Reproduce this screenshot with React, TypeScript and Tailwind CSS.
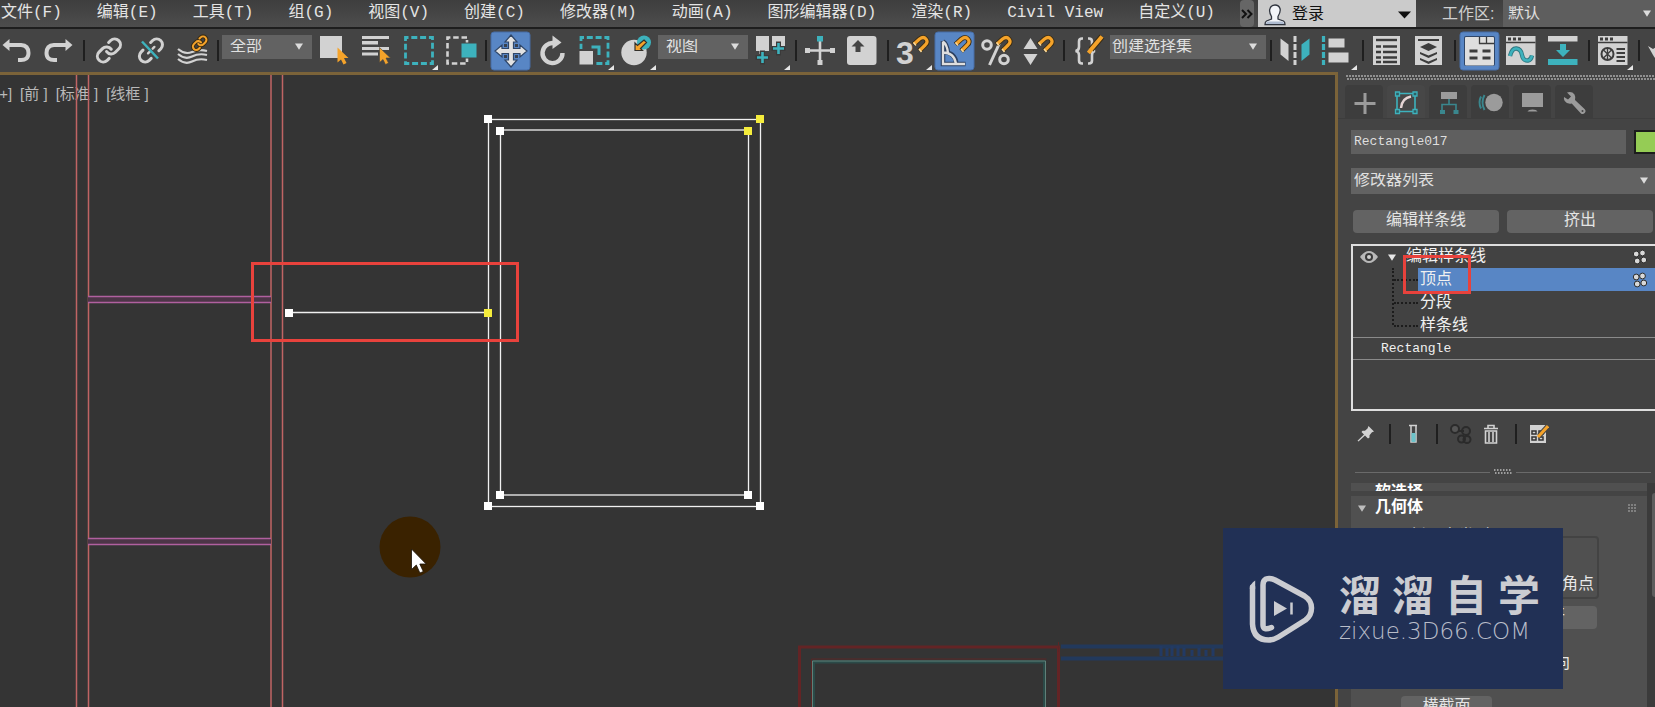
import React from "react";

const W = "#d2d2d2";
const T = "#3db2bd";
const O = "#f5a32a";
const D = "#3c3c3c";

const LINK_A = "M10 13a5 5 0 0 0 7.54.54l3-3a5 5 0 0 0-7.07-7.07l-1.72 1.71";
const LINK_B = "M14 11a5 5 0 0 0-7.54-.54l-3 3a5 5 0 0 0 7.07 7.07l1.71-1.71";

const menus = [
  "文件(F)",
  "编辑(E)",
  "工具(T)",
  "组(G)",
  "视图(V)",
  "创建(C)",
  "修改器(M)",
  "动画(A)",
  "图形编辑器(D)",
  "渲染(R)",
  "Civil View",
  "自定义(U)",
];

type ToolProps = { label: string; active?: boolean; flyout?: boolean; children: React.ReactNode };

function Tool({ label, active, flyout, children }: ToolProps) {
  return (
    <button type="button" aria-label={label} aria-pressed={active} className="flex h-[40px] w-[42px] shrink-0 items-center justify-center">
      <svg width="42" height="40" viewBox="0 -1 42 40" fill="none">
        {active && <rect x="1" y="0" width="39" height="38" rx="3" fill="#5886c5" stroke="#466da6" />}
        {children}
        {flyout && <path d="M40 33v5h-6z" fill="#e6e6e6" />}
      </svg>
    </button>
  );
}

function Sep() {
  return (
    <div className="flex w-2 shrink-0 justify-center">
      <div className="h-[21px] w-[2px] bg-[#1f1f1f]" />
    </div>
  );
}

function Magnet({ x = 0 }: { x?: number }) {
  return (
    <g transform={`translate(${x} 0)`} strokeLinecap="butt">
      <path d="M21.500 12.500 27.500 7q4-3 6.500 0t-.8 6l-6 6" stroke="#3a2c14" strokeWidth="5" />
      <path d="M22 12 27.500 7q4-3 6.500 0t-.8 6l-5.500 5.500" stroke={O} strokeWidth="3.200" />
      <path d="m21.500 10.500 2.500 3M27 17l2.500 3" stroke="#f6d9a0" strokeWidth="1.500" />
    </g>
  );
}

function Caret({ className, fill = "#dcdcdc" }: { className?: string; fill?: string }) {
  return (
    <svg className={className} width="8" height="7" viewBox="0 0 8 7">
      <path d="M0 0.500h8L4 6.800z" fill={fill} />
    </svg>
  );
}

type DropProps = { label: string; value: string; box: string; text?: string };

function Drop({ label, value, box, text = "pl-2" }: DropProps) {
  return (
    <div className={`relative shrink-0 ${box}`}>
      <select aria-label={label} className={`h-full w-full appearance-none bg-[#626262] pr-6 text-base leading-none text-[#e0e0e0] outline-none ${text}`}>
        <option>{value}</option>
      </select>
      <Caret className="pointer-events-none absolute right-[9px] top-1/2 -mt-1" />
    </div>
  );
}

function MenuBar() {
  return (
    <header className="flex h-[29px] shrink-0 overflow-hidden border-b-2 border-[#1e1e1e] bg-linear-to-b from-[#3e3e3e] to-[#4d4d4d]">
      <nav className="flex min-w-0 flex-1 items-center gap-[35px] overflow-hidden whitespace-nowrap pl-px pb-[2px]">
        {menus.map((m) => (
          <button key={m} type="button" className="shrink-0 text-base leading-5 text-[#e4e4e4]">
            {m}
          </button>
        ))}
      </nav>
      <div className="flex shrink-0">
        <button type="button" aria-label="更多" className="mr-1 flex h-full w-[14px] items-center justify-center rounded bg-[#666]">
          <svg width="12" height="10" viewBox="0 0 12 10" fill="none" stroke="#111" strokeWidth="2">
            <path d="m1 1 4 4-4 4M6.500 1l4 4-4 4" />
          </svg>
        </button>
        <button type="button" className="flex h-full w-[158px] items-center bg-[#cbcbcb] pl-[6px] pr-[5px] pt-[2px] text-base text-[#111]">
          <svg width="22" height="22" viewBox="0 0 22 22">
            <path d="M7.500 12.500C6 10 5 7 6 4.500 7 1.500 9 1 11 1s4 .5 5 3.500c.8 2.500-.5 5.500-2 8v2.500l5.500 2q1.500.8 1.500 3.500H1q0-2.700 1.500-3.500l5-2z" fill="#f3f5f9" stroke="#30353f" strokeWidth="1.300" />
            <path d="M2 20q0-2 1.500-2.500h15Q20 18 20 20z" fill="#aebbd0" />
          </svg>
          <span className="ml-[6px] flex-1 text-left leading-5">登录</span>
          <svg width="13" height="8" viewBox="0 0 13 8">
            <path d="M0 .5h13L6.500 7.500z" fill="#111" />
          </svg>
        </button>
        <label htmlFor="workspace" className="flex w-[87px] items-center pl-[26px] pt-px font-['Liberation_Sans','Noto_Sans_CJK_SC',sans-serif] text-base text-[#cfcfcf]">
          工作区:
        </label>
        <div className="relative w-[152px]">
          <select id="workspace" className="h-full w-full appearance-none bg-[#5e5e5e] pl-[5px] pt-px text-base leading-none text-[#e0e0e0]">
            <option>默认</option>
          </select>
          <Caret className="pointer-events-none absolute right-1 top-[10px]" />
        </div>
      </div>
    </header>
  );
}

function Toolbar() {
  return (
    <div role="toolbar" className="-ml-1 flex h-[43px] shrink-0 items-center overflow-hidden bg-[#444]">
      <Tool label="撤消">
        <path d="M6.500 13 13.500 7v12z" fill={W} />
        <path d="M12 13h13q7.500.5 7.500 8T24 28h-2" stroke={W} strokeWidth="4" />
      </Tool>
      <Tool label="重做">
        <path d="M34.500 13 27.500 7v12z" fill={W} />
        <path d="M29 13H16q-7.500.5-7.500 8T17 28h2" stroke={W} strokeWidth="4" />
      </Tool>
      <Sep />
      <Tool label="链接">
        <g transform="translate(7 4.500) scale(1.16)" stroke={W} strokeWidth="2.600" strokeLinecap="round">
          <path d={LINK_A} />
          <path d={LINK_B} />
        </g>
      </Tool>
      <Tool label="取消链接">
        <g transform="translate(7 4.500) scale(1.16)" stroke={W} strokeWidth="2.600" strokeLinecap="round">
          <path d="m18.840 12.250 1.720-1.710a5 5 0 0 0-.14-7.070 5 5 0 0 0-6.950 0l-1.720 1.710" />
          <path d="m5.170 11.750-1.710 1.710a5 5 0 0 0 .12 7.070 5 5 0 0 0 6.950 0l1.710-1.710" />
          <path d="m9.500 14.500 1.500-1.500M13.500 10.500 15 9" strokeWidth="2" />
        </g>
        <path d="m12 9.500 16 17" stroke={T} strokeWidth="2.500" />
      </Tool>
      <Tool label="绑定到空间扭曲">
        <g stroke={W} strokeWidth="2.200">
          <path d="M6 17q7 6 14 3t15-1" />
          <path d="M6 22q7 6 14 2.500T35 23" />
          <path d="M6 27q7 6 14 2.500T35 28" />
        </g>
        <g transform="translate(19.500 3) scale(.68)" strokeLinecap="round">
          <path d={LINK_A} stroke="#3a2c14" strokeWidth="6" />
          <path d={LINK_B} stroke="#3a2c14" strokeWidth="6" />
          <path d={LINK_A} stroke={O} strokeWidth="3" />
          <path d={LINK_B} stroke={O} strokeWidth="3" />
        </g>
      </Tool>
      <Sep />
      <Drop label="选择过滤器" value="全部" box="mb-[7px] h-6 w-[90px] mr-[2px]" />
      <Tool label="选择对象">
        <rect x="6" y="4" width="22" height="22" fill={W} />
        <path d="M23.500 15.500v15l3.500-3 2.500 5 3-1.500-2.500-5h4.500z" fill={O} />
      </Tool>
      <Tool label="按名称选择">
        <g fill={W}>
          <rect x="6" y="4" width="27" height="3" />
          <rect x="6" y="9" width="16" height="3.500" />
          <rect x="6" y="15" width="27" height="3" />
          <rect x="6" y="20.500" width="16" height="3" />
        </g>
        <path d="M23.500 15.500v15l3.500-3 2.500 5 3-1.500-2.500-5h4.500z" fill={O} stroke="#444" strokeWidth=".6" />
      </Tool>
      <Tool label="矩形选择区域" flyout>
        <rect x="7.500" y="5.500" width="27" height="26" stroke={T} strokeWidth="2.800" strokeDasharray="6 2.800" strokeDashoffset="3" />
      </Tool>
      <Tool label="窗口/交叉">
        <path d="M27 5.500H7.500v26H27V5.500" stroke={W} strokeWidth="2.600" strokeDasharray="5.500 2.800" />
        <rect x="20" y="10.500" width="17" height="16" fill="#444" />
        <rect x="21.500" y="11.500" width="15" height="14" fill={T} />
      </Tool>
      <Sep />
      <Tool label="选择并移动" active>
        <path
          d="M21 3l6 7h-3.500v6.500H30V13l7 6-7 6v-3.500h-6.500V28H27l-6 7-6-7h3.500v-6.500H12V25l-7-6 7-6v3.500h6.500V10H15z"
          fill="#e2e2e2"
          stroke="#2f4668"
          strokeWidth="1.200"
        />
        <path d="M14 12h3v3h-3zM25 12h3v3h-3zM14 23h3v3h-3zM25 23h3v3h-3z" fill="#39424f" />
      </Tool>
      <Tool label="选择并旋转">
        <path d="M22 11.200A10 10 0 1 0 30.500 21" stroke={W} strokeWidth="4.400" />
        <path d="M20.500 3.500 29.500 10.500 20.500 17z" fill={W} />
      </Tool>
      <Tool label="选择并缩放" flyout>
        <rect x="7" y="5.500" width="27" height="26" stroke={T} strokeWidth="2.800" strokeDasharray="6 2.800" strokeDashoffset="3" />
        <rect x="4" y="17" width="17" height="17" fill="#444" />
        <rect x="5.500" y="19" width="13.500" height="13.500" fill={W} />
        <path d="M17.500 15H25v8" stroke={T} strokeWidth="3" />
      </Tool>
      <Tool label="选择并放置" flyout>
        <circle cx="18" cy="20.500" r="12.700" fill={W} />
        <circle cx="28" cy="10.500" r="7" fill={T} />
        <path d="m28 8 2.500 2.500-6 6 2 2h-7.500V11l2.500 2.500z" fill={O} stroke="#33302a" strokeWidth="1.200" />
      </Tool>
      <Drop label="参考坐标系" value="视图" box="mb-[7px] h-6 w-[90px] mr-[2px]" />
      <Tool label="使用轴点中心" flyout>
        <path d="M6 4h13v15h-4v3H9.500v-3H6zM22 4h13v12H22z" fill={W} />
        <path d="M12.500 18.500v14M5.500 25.500h14M28.500 9.500v14M21.500 16.500h14" stroke="#3a3a3a" strokeWidth="5" />
        <path d="M12.500 20v11M7 25.500h11M28.500 11v11M23 16.500h11" stroke={T} strokeWidth="2.600" />
      </Tool>
      <Sep />
      <Tool label="选择并操纵">
        <path d="M20 6v26M6 18.500h28" stroke={W} strokeWidth="2.600" />
        <path d="M5 16h5v5H5zM30 16h5v5h-5zM17.500 28h5v5h-5z" fill={W} />
        <rect x="17" y="4" width="6" height="5.500" fill={T} />
      </Tool>
      <Tool label="键盘快捷键覆盖切换">
        <rect x="5" y="4" width="29.500" height="29" rx="3" fill={W} />
        <path d="m16 8 6.500 6.500H18.500V20h-5v-5.500H9.500z" fill="#444" />
      </Tool>
      <Sep />
      <Tool label="捕捉开关" flyout>
        <text x="4" y="32" fill={W} fontSize="32" fontWeight="700" fontFamily="Liberation Sans, sans-serif">
          3
        </text>
        <Magnet />
      </Tool>
      <Tool label="角度捕捉" active>
        <path d="M9 9v23H31.500M9 20q12 0 13.500 12M9 9.500q4 2 5 11.500" stroke="#2c4060" strokeWidth="4.600" />
        <path d="M9 9.500V32H31M9 20.500q11 0 13 11M9 9.500q4 3 5 11.500" stroke="#dedede" strokeWidth="2.300" />
        <Magnet />
      </Tool>
      <Tool label="百分比捕捉">
        <circle cx="11" cy="13" r="4.300" stroke={W} strokeWidth="3" />
        <circle cx="28" cy="27.500" r="4.300" stroke={W} strokeWidth="3" />
        <path d="M24.500 9 13.500 33" stroke={W} strokeWidth="3" />
        <Magnet x={-1} />
      </Tool>
      <Tool label="微调器捕捉">
        <path d="M12.500 6 19.500 17h-14zM12.500 33 5.500 22h14z" fill={W} />
        <Magnet x={-1} />
      </Tool>
      <Sep />
      <Tool label="编辑命名选择集">
        <g stroke={W} strokeWidth="2.600">
          <path d="M15 6.500h-1q-3 0-3 3v5.500q0 3.500-3.500 4 3.500.5 3.500 4v5.500q0 3 3 3h1" />
          <path d="M20 6.500h1q3 0 3 3v5.500q0 3.500 3 4-3 .5-3 4v5.500q0 3-3 3h-1" />
        </g>
        <path d="m34 4.500-11 13" stroke="#3a2c14" strokeWidth="6" />
        <path d="m34 4.500-10.500 12.500-3 4" stroke={O} strokeWidth="4" />
      </Tool>
      <Drop label="命名选择集" value="创建选择集" box="mb-[7px] h-6 w-[156px] mr-px" text="pl-[2px]" />
      <Sep />
      <Tool label="镜像">
        <path d="m5.500 6.500 8 6V29l-8-6.500z" fill={W} />
        <path d="M20 4v29" stroke={W} strokeWidth="3" strokeDasharray="6 2" />
        <path d="m34.500 6.500-8 6V29l8-6.500z" fill={T} />
      </Tool>
      <Tool label="对齐" flyout>
        <path d="M6.500 4v29" stroke={T} strokeWidth="3.200" strokeDasharray="6 2" />
        <path d="M11.500 6.500h16v9h-16zM11.500 20.500h20v10h-20z" fill={W} />
      </Tool>
      <Sep />
      <Tool label="场景资源管理器">
        <rect x="6" y="4" width="27" height="29" fill={W} />
        <path d="M9 8h21" stroke={D} strokeWidth="2.400" />
        <path d="M9 14.500h5M9 20h5M9 25.500h5M9 30h5M16 14.500h14M16 20h14M16 25.500h14M16 30h14" stroke={D} strokeWidth="2.400" />
      </Tool>
      <Tool label="层资源管理器">
        <rect x="6" y="4" width="27" height="29" fill={W} />
        <path d="M9 8h21" stroke={D} strokeWidth="2" />
        <path d="m19.500 11 8.500 4-8.500 4-8.500-4zM11 20l8.500 3.500L28 20v2l-8.500 4-8.500-4zM11 26l8.500 3.500L28 26v2l-8.500 4-8.500-4z" fill={D} />
      </Tool>
      <Sep />
      <Tool label="切换功能区" active>
        <rect x="5" y="4" width="31" height="30" rx="2" fill="#2f4668" />
        <rect x="6" y="5" width="29" height="28.500" rx="1" fill="#dedede" />
        <path d="M20.500 5v6.500H35M27.500 5v6.500" stroke={D} strokeWidth="1.300" />
        <path d="M10.500 19h8M23.500 19h8M10.500 26h8M23.500 26h8" stroke={D} strokeWidth="3" />
      </Tool>
      <Tool label="曲线编辑器">
        <rect x="5" y="4" width="29.500" height="29" fill={W} />
        <path d="M5 10.500h29.500" stroke={D} strokeWidth="1.500" />
        <path d="M7 5.500h3v3H7zM12 5.500h3v3h-3zM17 5.500h3v3h-3z" fill={D} />
        <path d="M9 24q2-8 6.500-7.500T21 23t6 5.500q3-.5 4-5" stroke="#2e7780" strokeWidth="4.400" />
        <path d="M9 24q2-8 6.500-7.500T21 23t6 5.500q3-.5 4-5" stroke={T} strokeWidth="2.600" />
      </Tool>
      <Tool label="图解视图">
        <rect x="5" y="4" width="29.500" height="5.500" fill={W} />
        <path d="M17 12h6v6h4l-7 7-7-7h4z" fill={T} />
        <rect x="5" y="27" width="29.500" height="6" fill={T} />
      </Tool>
      <Sep />
      <Tool label="渲染设置" flyout>
        <rect x="5" y="4" width="29.500" height="29" fill={W} />
        <path d="M5 10.500h29.500" stroke={D} strokeWidth="1.500" />
        <path d="M7 5.500h3v3H7zM12 5.500h3v3h-3zM17 5.500h3v3h-3z" fill={D} />
        <circle cx="14.500" cy="22" r="6" stroke={D} strokeWidth="2" />
        <path d="m10.500 18 8 8m0-8-8 8M14.500 16v12" stroke={D} strokeWidth="1.300" />
        <path d="M23.500 17H32M23.500 21H32M23.500 25H32M23.500 29H32" stroke={D} strokeWidth="2" />
      </Tool>
      <Sep />
      <Tool label="渲染帧窗口">
        <path d="m5 14 5 9q4 8 16 8V15H13l-3 2z" fill={W} />
      </Tool>
    </div>
  );
}

const vertices = [
  [488, 119, "#fff"],
  [760, 119, "#f4ec3c"],
  [488, 506, "#fff"],
  [760, 506, "#fff"],
  [500, 131, "#fff"],
  [748, 131, "#f4ec3c"],
  [500, 495, "#fff"],
  [748, 495, "#fff"],
  [289, 313, "#fff"],
  [488, 313, "#f4ec3c"],
] as const;

function Viewport() {
  return (
    <section aria-label="前视图" className="relative min-w-0 flex-1 overflow-hidden border-t-[3px] border-r-[3px] border-[#7b6339] bg-[#343434]">
      <div className="-ml-[5px] flex gap-2 pt-[9px] font-['Liberation_Sans','Noto_Sans_CJK_SC',sans-serif] text-[15px] leading-5 text-[#b9b9b9]">
        <button type="button">[+]</button>
        <button type="button">[前 ]</button>
        <button type="button">[标准 ]</button>
        <button type="button">[线框 ]</button>
      </div>
      <svg className="pointer-events-none absolute inset-0 h-full w-full" fill="none">
        <g transform="translate(0 -75)">
          <path d="M76.500 75v640M88.500 75v640M271 75v640M282.500 75v640" stroke="#c06464" strokeWidth="1.500" />
          <path d="M88 297h183v6H88zM88 538h183v6H88z" fill="#4c3547" />
          <path d="M88 296.500h183M88 302.500h183M88 538.500h183M88 544.500h183" stroke="#b0609f" strokeWidth="1.300" />
          <path d="M799.500 710v-63h259v63" stroke="#632425" strokeWidth="3" />
          <path d="M1058.500 642v10M811.500 710v-51h235" stroke="#5a2626" strokeWidth="1" />
          <path d="M813.500 710v-48h231v48" stroke="#2b4a48" strokeWidth="3" />
          <path d="M812.500 710v-49h233v49" stroke="#5f8078" />
          <path d="M1061 646.500h170M1061 658.500h170" stroke="#22395c" strokeWidth="4" />
          <path d="M1161 646v10M1167 648v8M1172 646v10M1178 646v10M1184 648v8M1192 650v6M1199 648v8M1206 650v6M1213 648v8" stroke="#223a64" strokeWidth="3" />
          <g stroke="#f0f0f0" strokeWidth="1.300">
            <rect x="488.500" y="119.500" width="272" height="387" />
            <rect x="500.500" y="130" width="248" height="365" />
            <path d="M288 312.500h200" />
          </g>
          {vertices.map(([x, y, c]) => (
            <rect key={`${x}-${y}`} x={x - 4} y={y - 4} width="8" height="8" fill={c} />
          ))}
          <rect x="252.500" y="263.500" width="265" height="77" stroke="#e8423c" strokeWidth="3" />
          <circle cx="410" cy="547" r="30.500" fill="#3a2200" />
          <path d="M411.500 549v20.500l4.800-4.500 3.600 8 3.400-1.500-3.500-7.500h6.400z" fill="#fff" stroke="#1b1208" strokeWidth=".8" />
        </g>
      </svg>
    </section>
  );
}

const tabs: { label: string; icon: React.ReactNode }[] = [
  { label: "创建", icon: <path d="M20 8v21M9.500 18.500h21" stroke="#9b9b9b" strokeWidth="3" /> },
  {
    label: "修改",
    icon: (
      <>
        <path d="M10 8.500h18v18H10z" stroke={T} strokeWidth="1.600" />
        <path d="M8.500 7h4v4h-4zM26 7h4v4h-4zM8.500 24.500h4v4h-4zM26 24.500h4v4h-4z" fill="#2f5f64" stroke={T} strokeWidth="1.300" />
        <path d="M14 23q1-10 10-11.500" stroke="#e5d5d5" strokeWidth="2.500" />
      </>
    ),
  },
  {
    label: "层次",
    icon: (
      <>
        <path d="M12 7h16v7H12z" fill="#9b9b9b" />
        <path d="M20 14v6M13 26v-6.500h14V26" stroke="#3a878e" strokeWidth="1.600" />
        <path d="M11 25h5v4h-5zM24.500 25h5v4h-5z" fill="#3a878e" />
      </>
    ),
  },
  {
    label: "运动",
    icon: (
      <>
        <circle cx="23" cy="17.500" r="8.700" fill="#9b9b9b" />
        <path d="M13.500 10q-4 7.500 0 15M10 11.500q-3 6 0 12" stroke="#3a878e" strokeWidth="2" />
      </>
    ),
  },
  {
    label: "显示",
    icon: (
      <>
        <path d="M9 8h21v14H9z" fill="#9b9b9b" />
        <path d="M14.500 26.500q1-2 5-2t5 2z" fill="#9b9b9b" />
      </>
    ),
  },
  {
    label: "实用程序",
    icon: (
      <>
        <path d="M12 7.500q5-1.500 7.500 2 1.500 3 .5 5.500l9.500 9q2 2 .2 4t-4 .2l-9-9.700q-4.500 1-7-2.500-1.200-2-.7-4l4 2.500 3-3z" fill="#9b9b9b" />
        <circle cx="27.500" cy="26" r="1" fill="#444" />
      </>
    ),
  },
];

function Dots() {
  return (
    <svg width="16" height="16" viewBox="0 0 16 16">
      <g fill="#d8d8d8" stroke="#2c2c2c" strokeWidth="1">
        <circle cx="4.200" cy="5" r="2.900" />
        <circle cx="10.500" cy="4" r="2.900" />
        <circle cx="5.200" cy="12" r="2.900" />
        <circle cx="11.800" cy="11" r="2.900" />
      </g>
    </svg>
  );
}

function Stack() {
  const children = ["顶点", "分段", "样条线"];
  return (
    <div className="relative h-[167px] border-2 border-r-0 border-[#dedede] bg-[#424242] text-base text-[#f0f0f0]">
      <div className="flex h-[22px] items-center pl-[7px] pr-[7px]">
        <svg width="18" height="12" viewBox="0 0 18 12">
          <path d="M0 6q9-12 18 0-9 12-18 0z" fill="#b9b9b9" />
          <circle cx="9" cy="6" r="4" fill="#3a3a3a" />
          <circle cx="9" cy="6" r="2" fill="#cfcfcf" />
        </svg>
        <Caret className="ml-[10px]" fill="#e6e6e6" />
        <span className="ml-[10px] flex-1 leading-[22px]">编辑样条线</span>
        <Dots />
      </div>
      <div className="relative">
        <div className="absolute left-[39px] top-0 h-[57px] border-l-2 border-dotted border-[#1c1c1c]" />
        <ul>
          {children.map((c, i) => (
            <li key={c} className="flex h-[23px] items-center pl-[41px]">
              <span className="w-6 border-t-2 border-dotted border-[#1c1c1c]" />
              <span className={`flex h-full flex-1 items-center pl-[2px] pr-[7px] leading-[22px] ${i === 0 ? "bg-[#5886c5]" : ""}`}>
                <span className="flex-1">{c}</span>
                {i === 0 && <Dots />}
              </span>
            </li>
          ))}
        </ul>
      </div>
      <div className="flex h-[23px] items-center border-y border-[#8a8a8a] pl-[28px] text-[13px] leading-none">Rectangle</div>
      <div className="pointer-events-none absolute left-[50px] top-[9px] h-[39px] w-[68px] border-[3px] border-[#e8423c]" />
    </div>
  );
}

function ToolSep() {
  return <div className="h-5 w-[2px] bg-[#1f1f1f]" />;
}

function StackTools() {
  return (
    <div className="mt-[13px] flex h-5 shrink-0 items-center pl-[5px]">
      <button type="button" aria-label="锁定堆栈">
        <svg width="20" height="20" viewBox="0 0 20 20">
          <path d="m12.500 2 5.500 5.500-2 .8-2.500 3v2.200l-1.500 1-3-3-6.500 6-1-.8 6.500-6.200-2.500-2.500 1-1.300h2.500l2.500-2.200z" fill={W} />
        </svg>
      </button>
      <div className="ml-[13px]">
        <ToolSep />
      </div>
      <button type="button" aria-label="显示最终结果" className="ml-3">
        <svg width="20" height="20" viewBox="0 0 20 20" fill="none">
          <path d="M6 1.500h8M8 2v16h5V2" stroke={W} strokeWidth="1.500" />
          <path d="M8.500 9h4v9h-4z" fill="#6cc3ca" />
        </svg>
      </button>
      <div className="ml-[13px]">
        <ToolSep />
      </div>
      <button type="button" aria-label="使唯一" className="ml-3">
        <svg width="24" height="20" viewBox="0 0 24 20" fill="none" stroke="#2b2b2b" strokeWidth="2">
          <circle cx="5" cy="5" r="4" fill="#555" />
          <path d="M9 7h5" />
          <circle cx="11.500" cy="15" r="3.500" />
          <circle cx="17" cy="15.500" r="3.500" />
          <circle cx="16" cy="7" r="4" />
        </svg>
      </button>
      <button type="button" aria-label="移除修改器" className="ml-[9px]">
        <svg width="16" height="20" viewBox="0 0 16 20" fill="none" stroke={W} strokeWidth="1.600">
          <path d="M1 4.500h14M5 4V1.500h6V4M2.500 7v12h11V7zM6 8v10M10 8v10" />
        </svg>
      </button>
      <div className="ml-4">
        <ToolSep />
      </div>
      <button type="button" aria-label="配置修改器集" className="ml-3">
        <svg width="20" height="20" viewBox="0 0 20 20" fill="none">
          <path d="M1 1h16v18H1z" fill={W} />
          <path d="M3 7h4v3H3zM10 7h4v3h-4zM3 13h4v3H3zM10 13h4v3h-4z" stroke="#333" strokeWidth="1.500" />
          <path d="m19 2-9 10" stroke="#444" strokeWidth="5" />
          <path d="m19 2-10 11" stroke={O} strokeWidth="3" />
        </svg>
      </button>
    </div>
  );
}

const smallButton = "h-[23px] rounded bg-[#636363] text-base leading-[23px] text-[#e4e4e4]";

function Geometry() {
  return (
    <div className="mt-2 flex min-h-0 flex-1 overflow-hidden text-base text-[#e8e8e8]">
      <div className="flex min-w-0 flex-1 flex-col">
        <div className="flex h-2 shrink-0 items-end overflow-hidden bg-[#505050] pl-6 font-bold leading-5 text-white">
          <span className="-mb-3 h-5">软选择</span>
        </div>
        <div className="mt-[5px] min-h-0 flex-1 bg-[#505050]">
          <button type="button" className="flex h-6 w-full items-center pl-[7px] pr-[10px] text-left font-bold text-white">
            <Caret fill="#bdbdbd" />
            <span className="ml-[9px] flex-1 leading-6">几何体</span>
            <svg width="9" height="9" viewBox="0 0 9 9">
              <path d="M1 0v9M4 0v9M7 0v9" stroke="#909090" strokeWidth="1.500" strokeDasharray="2 1" />
            </svg>
          </button>
          <fieldset className="mx-12 mt-[9px] rounded-sm border-2 border-[#434343]">
            <legend className="ml-2 px-px leading-4">新顶点类型</legend>
            <div className="flex h-[52px] items-end justify-end pr-[3px] pb-[2px] leading-5">
              <label className="flex items-center gap-1">
                <input type="radio" name="vertex-type" />
                角点
              </label>
            </div>
          </fieldset>
          <div className="mx-[50px] mt-[7px] flex justify-end">
            <button type="button" className={`w-24 ${smallButton}`}>断开</button>
          </div>
          <div className="mx-[50px] mt-[23px] flex justify-end pr-[27px] leading-6">
            <label className="flex items-center gap-1">
              <input type="checkbox" />
              重定向
            </label>
          </div>
          <button type="button" className={`mt-5 ml-[50px] w-[91px] ${smallButton}`}>横截面</button>
        </div>
      </div>
      <div className="w-2 bg-[#3b3b3b] pl-[5px] pt-[10px]">
        <div className="h-[104px] rounded-l-sm bg-[#5d5d5d]" />
      </div>
    </div>
  );
}

function CommandPanel() {
  return (
    <aside className="flex w-[317px] shrink-0 flex-col overflow-hidden bg-[#444] pt-[3px]">
      <svg className="ml-2 h-[5px] w-full shrink-0">
        <path d="M0 1h320" stroke="#a9a9a9" strokeWidth="1.500" strokeDasharray="2 1" />
        <path d="M1 4h320" stroke="#a9a9a9" strokeWidth="1.500" strokeDasharray="2 1" />
      </svg>
      <div role="tablist" className="mt-[5px] flex h-[34px] shrink-0 gap-1 border-b border-[#3d3d3d] pl-[7px]">
        {tabs.map((t, i) => (
          <button key={t.label} type="button" role="tab" aria-label={t.label} aria-selected={i === 1} className={`w-[38px] rounded-t ${i === 1 ? "bg-[#474747]" : "bg-[#3d3d3d]"}`}>
            <svg width="38" height="34" viewBox="0 0 38 34" fill="none">
              {t.icon}
            </svg>
          </button>
        ))}
      </div>
      <div className="flex min-h-0 flex-1 flex-col pl-[13px] pt-[11px]">
        <div className="flex h-6 shrink-0">
          <input aria-label="对象名称" defaultValue="Rectangle017" className="min-w-0 flex-1 bg-[#5f5f5f] px-[3px] text-[13px] text-[#dedede] outline-none" />
          <button type="button" aria-label="对象颜色" className="ml-2 w-[21px] border-2 border-r-0 border-[#1c1c1c] bg-[#95cc55]" />
        </div>
        <Drop label="修改器列表" value="修改器列表" box="mt-[14px] h-[26px] -mr-[2px]" text="pl-[3px]" />
        <div className="mt-4 grid shrink-0 grid-cols-2 gap-2 pl-[2px] pr-[2px]">
          <button type="button" className={smallButton}>编辑样条线</button>
          <button type="button" className={smallButton}>挤出</button>
        </div>
        <div className="mt-[11px] shrink-0">
          <Stack />
        </div>
        <StackTools />
        <div className="mt-[25px] flex h-[6px] shrink-0 items-center gap-1 pl-1 pr-1">
          <div className="h-px flex-1 bg-[#6a6a6a]" />
          <svg width="18" height="6" viewBox="0 0 18 6">
            <path d="M0 1h18M1 4h18" stroke="#bcbcbc" strokeWidth="1.500" strokeDasharray="1.500 1.500" />
          </svg>
          <div className="h-px flex-1 bg-[#6a6a6a]" />
        </div>
        <Geometry />
      </div>
    </aside>
  );
}

function Watermark() {
  return (
    <div className="absolute bottom-[18px] right-[92px] flex h-[161px] w-[340px] items-center bg-[#213055] pl-[26px] font-['Inter','Noto_Sans_CJK_SC',sans-serif] text-[#cbccd1]">
      <svg width="66" height="68" viewBox="0 0 66 68" fill="none" stroke="#cbccd1" strokeLinecap="round" strokeLinejoin="round">
        <path d="M3.500 12v37q1 16 16 16 5 0 10-3l27-17q6-4.500 6-12t-7-12L26 5q-5-2.500-9-1-3 1.500-3 6v40q0 6 8.500 2.500" strokeWidth="5.500" />
        <path d="M.8 14Q1 9 6.200 5.500V14z" fill="#cbccd1" stroke="none" />
        <path d="M25 26v15l13-7.500z" fill="#cbccd1" stroke="none" />
        <path d="M42.500 27.500v12" strokeWidth="2.500" strokeLinecap="butt" />
      </svg>
      <div className="ml-6">
        <div className="flex gap-[11px] text-[42px] font-bold leading-[44px]">
          {["溜", "溜", "自", "学"].map((c, i) => (
            <span key={i}>{c}</span>
          ))}
        </div>
        <div className="mt-px font-['DejaVu_Sans',sans-serif] text-[23px] font-extralight leading-6 text-[#b9bdc9]">zixue.3D66.COM</div>
      </div>
    </div>
  );
}

export default function App() {
  return (
    <div className="relative flex h-screen flex-col overflow-hidden bg-[#444] font-['Liberation_Mono','Noto_Sans_CJK_SC',monospace]">
      <MenuBar />
      <Toolbar />
      <main className="flex min-h-0 flex-1">
        <Viewport />
        <CommandPanel />
      </main>
      <Watermark />
    </div>
  );
}
